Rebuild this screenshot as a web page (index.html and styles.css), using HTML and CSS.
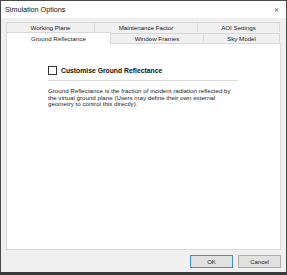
FILE: index.html
```html
<!DOCTYPE html>
<html>
<head>
<meta charset="utf-8">
<link rel="stylesheet" href="styles.css">
</head>
<body>
<div class="window">
  <div class="titlebar">
    <span class="title">Simulation Options</span>
    <span class="close">✕</span>
  </div>
  <div class="tabs">
    <div class="row row1">
      <div class="tab t1">Working Plane</div>
      <div class="tab t2">Maintenance Factor</div>
      <div class="tab t3">AOI Settings</div>
    </div>
    <div class="row row2">
      <div class="tab sel t4">Ground Reflectance</div>
      <div class="tab t5">Window Frames</div>
      <div class="tab t6">Sky Model</div>
    </div>
  </div>
  <div class="panel">
    <div class="content">
      <label class="check"><span class="box"></span><span class="label">Customise Ground Reflectance</span></label>
      <div class="sep"></div>
      <p class="desc">Ground Reflectance is the fraction of incident radiation reflected by<br>the virtual ground plane (Users may define their own external<br>geometry to control this directly).</p>
    </div>
  </div>
  <div class="footer">
    <button class="btn ok">OK</button>
    <button class="btn">Cancel</button>
  </div>
</div>
</body>
</html>
```
FILE: styles.css
```css
html, body {
  margin: 0;
  padding: 0;
}
body {
  width: 287px;
  height: 275px;
  background: #3a3a3a;
  font-family: "Liberation Sans", Arial, sans-serif;
  color: #222;
  overflow: hidden;
}
.window {
  width: 287px;
  height: 272px;
  box-sizing: border-box;
  border: 1px solid #4a4a4a;
  border-bottom: none;
  background: #f0f0f0;
  display: flex;
  flex-direction: column;
}
.titlebar {
  height: 17px;
  background: #ffffff;
  display: flex;
  align-items: center;
  justify-content: space-between;
  padding: 0 7px 0 4px;
  flex: none;
}
.title {
  font-size: 7.2px;
  color: #111;
}
.close {
  font-size: 6px;
  color: #555;
}
.tabs {
  margin: 4px 6px 0 5px;
  flex: none;
}
.row {
  display: flex;
  font-size: 6.2px;
  color: #222;
}
.row1 {
  height: 10px;
}
.row2 {
  height: 11px;
  align-items: flex-end;
}
.tab {
  box-sizing: border-box;
  border: 1px solid #d9d9d9;
  border-bottom: none;
  background: #f0f0f0;
  display: flex;
  align-items: center;
  justify-content: center;
  height: 10px;
  margin-right: -1px;
}
.row2 .tab {
  height: 10px;
}
.row2 .tab.sel {
  background: #ffffff;
  border-color: #d9d9d9;
  position: relative;
  z-index: 1;
  margin-bottom: -1px;
  height: 12px;
}
.t1 { width: 89px; }
.t2 { width: 104px; }
.t3 { width: 83px; }
.t4 { width: 105px; }
.t5 { width: 94px; }
.t6 { width: 77px; }
.panel {
  margin: 0 5px 0 5px;
  height: 207px;
  box-sizing: border-box;
  border: 1px solid #d9d9d9;
  background: #ffffff;
  flex: none;
}
.content {
  padding: 21px 0 0 41px;
  width: 190px;
}
.check {
  display: flex;
  align-items: center;
  height: 10px;
}
.box {
  width: 7px;
  height: 7px;
  border: 1px solid #333;
  background: #fff;
  flex: none;
}
.label {
  margin-left: 4px;
  font-size: 6.8px;
  font-weight: bold;
  color: #111;
}
.sep {
  height: 1px;
  background: #dcdcdc;
  margin-top: 5px;
}
.desc {
  margin: 7px 0 0 0;
  font-size: 6.2px;
  line-height: 6.5px;
  color: #222;
  white-space: nowrap;
}
.footer {
  flex: 1;
  display: flex;
  justify-content: flex-end;
  align-items: flex-start;
  gap: 5px;
  padding: 5px 5px 0 0;
}
.btn {
  width: 43px;
  height: 13px;
  box-sizing: border-box;
  border: 1px solid #adadad;
  background: #e1e1e1;
  font-family: "Liberation Sans", Arial, sans-serif;
  font-size: 6px;
  color: #222;
  padding: 0;
  margin: 0;
}
.btn.ok {
  border-color: #3a8ee6;
}
```
